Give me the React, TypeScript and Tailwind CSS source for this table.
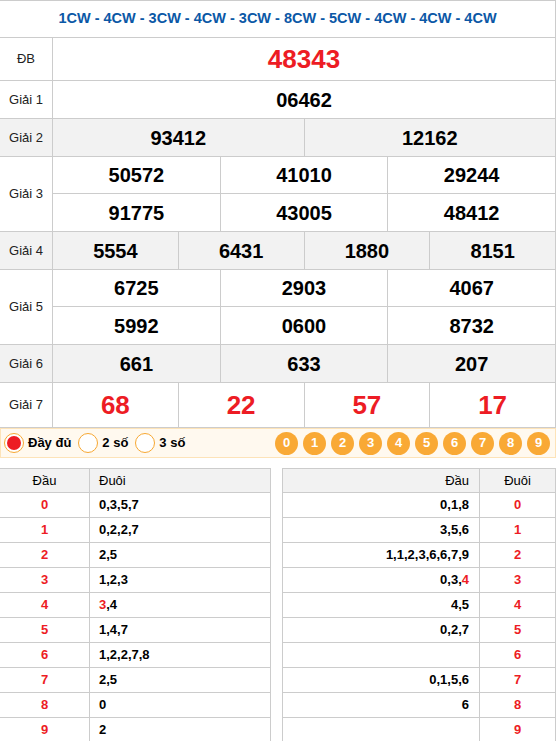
import { FC, ReactNode } from "react";

const RED = "text-[#ed1c24]";

interface PrizeRowProps {
  label: string;
  rows: string[][];
  gray?: boolean;
  big?: boolean;
  red?: boolean;
  rowH?: string;
}

const PrizeRow: FC<PrizeRowProps> = ({ label, rows, gray, big, red, rowH = "h-[37px]" }) => {
  return (
    <div className={`flex border-b border-[#cccccc] ${gray ? "bg-[#f2f2f2]" : "bg-white"}`}>
      <div className="w-[53px] shrink-0 border-r border-[#cccccc] flex items-center justify-center text-[13px] text-[#222]">
        {label}
      </div>
      <div className="flex-1 flex flex-col divide-y divide-[#cccccc]">
        {rows.map((r, i) => (
          <div key={i} className={`flex divide-x divide-[#cccccc] ${rowH}`}>
            {r.map((n, j) => (
              <div
                key={j}
                className={`flex-1 flex items-center justify-center font-bold ${
                  big ? "text-[26px]" : "text-[20px]"
                } ${red ? RED : "text-black"}`}
              >
                {n}
              </div>
            ))}
          </div>
        ))}
      </div>
    </div>
  );
};

const dauLeft: ReactNode[] = [
  "0,3,5,7",
  "0,2,2,7",
  "2,5",
  "1,2,3",
  <>
    <span className={RED}>3</span>,4
  </>,
  "1,4,7",
  "1,2,2,7,8",
  "2,5",
  "0",
  "2",
];

const duoiRight: ReactNode[] = [
  "0,1,8",
  "3,5,6",
  "1,1,2,3,6,6,7,9",
  <>
    0,3,<span className={RED}>4</span>
  </>,
  "4,5",
  "0,2,7",
  "",
  "0,1,5,6",
  "6",
  "",
];

const Radio: FC<{ checked?: boolean; label: string }> = ({ checked, label }) => (
  <div className="flex items-center gap-[4px]">
    <span className="w-[20px] h-[20px] rounded-full border border-[#f7a833] bg-white flex items-center justify-center">
      {checked ? <span className="w-[14px] h-[14px] rounded-full bg-[#ed1c24]" /> : null}
    </span>
    <span className="text-[13px] font-bold text-black">{label}</span>
  </div>
);

export default function App() {
  return (
    <div className="w-[556px] bg-white font-['Liberation_Sans',Arial,sans-serif]">
      <div className="border-t border-r border-[#cccccc]">
        <div className="h-[37px] border-b border-[#cccccc] flex items-center justify-center text-[14.5px] font-bold text-[#0b58a6]">
          1CW - 4CW - 3CW - 4CW - 3CW - 8CW - 5CW - 4CW - 4CW - 4CW
        </div>
        <PrizeRow label="ĐB" rows={[["48343"]]} big red rowH="h-[42px]" />
        <PrizeRow label="Giải 1" rows={[["06462"]]} />
        <PrizeRow label="Giải 2" rows={[["93412", "12162"]]} gray />
        <PrizeRow
          label="Giải 3"
          rows={[
            ["50572", "41010", "29244"],
            ["91775", "43005", "48412"],
          ]}
        />
        <PrizeRow label="Giải 4" rows={[["5554", "6431", "1880", "8151"]]} gray />
        <PrizeRow
          label="Giải 5"
          rows={[
            ["6725", "2903", "4067"],
            ["5992", "0600", "8732"],
          ]}
        />
        <PrizeRow label="Giải 6" rows={[["661", "633", "207"]]} gray />
        <PrizeRow label="Giải 7" rows={[["68", "22", "57", "17"]]} big red rowH="h-[44px]" />
      </div>

      <div className="h-[30px] flex items-center justify-between bg-[#fff9ef] border border-[#fde3b8] pl-[3px] pr-[5px]">
        <div className="flex items-center gap-[7px]">
          <Radio checked label="Đầy đủ" />
          <Radio label="2 số" />
          <Radio label="3 số" />
        </div>
        <div className="flex items-center gap-[5px]">
          {["0", "1", "2", "3", "4", "5", "6", "7", "8", "9"].map((d) => (
            <span
              key={d}
              className="w-[23px] h-[23px] rounded-full bg-[#f9a935] text-white text-[13px] font-bold flex items-center justify-center"
            >
              {d}
            </span>
          ))}
        </div>
      </div>

      <div className="mt-[10px] flex justify-between text-[13px]">
        <div className="w-[271px] border-t border-r border-[#cccccc]">
          <div className="flex h-[24px] bg-[#f2f2f2] border-b border-[#cccccc]">
            <div className="w-[90px] border-r border-[#cccccc] flex items-center justify-center">Đầu</div>
            <div className="flex-1 flex items-center pl-[9px]">Đuôi</div>
          </div>
          {dauLeft.map((v, i) => (
            <div key={i} className="flex h-[25px] border-b border-[#cccccc]">
              <div className={`w-[90px] border-r border-[#cccccc] flex items-center justify-center font-bold ${RED}`}>
                {i}
              </div>
              <div className="flex-1 flex items-center pl-[9px] font-bold">{v}</div>
            </div>
          ))}
        </div>

        <div className="w-[274px] border-t border-l border-r border-[#cccccc]">
          <div className="flex h-[24px] bg-[#f2f2f2] border-b border-[#cccccc]">
            <div className="w-[197px] border-r border-[#cccccc] flex items-center justify-end pr-[10px]">Đầu</div>
            <div className="flex-1 flex items-center justify-center">Đuôi</div>
          </div>
          {duoiRight.map((v, i) => (
            <div key={i} className="flex h-[25px] border-b border-[#cccccc]">
              <div className="w-[197px] border-r border-[#cccccc] flex items-center justify-end pr-[10px] font-bold">
                {v}
              </div>
              <div className={`flex-1 flex items-center justify-center font-bold ${RED}`}>{i}</div>
            </div>
          ))}
        </div>
      </div>
    </div>
  );
}
